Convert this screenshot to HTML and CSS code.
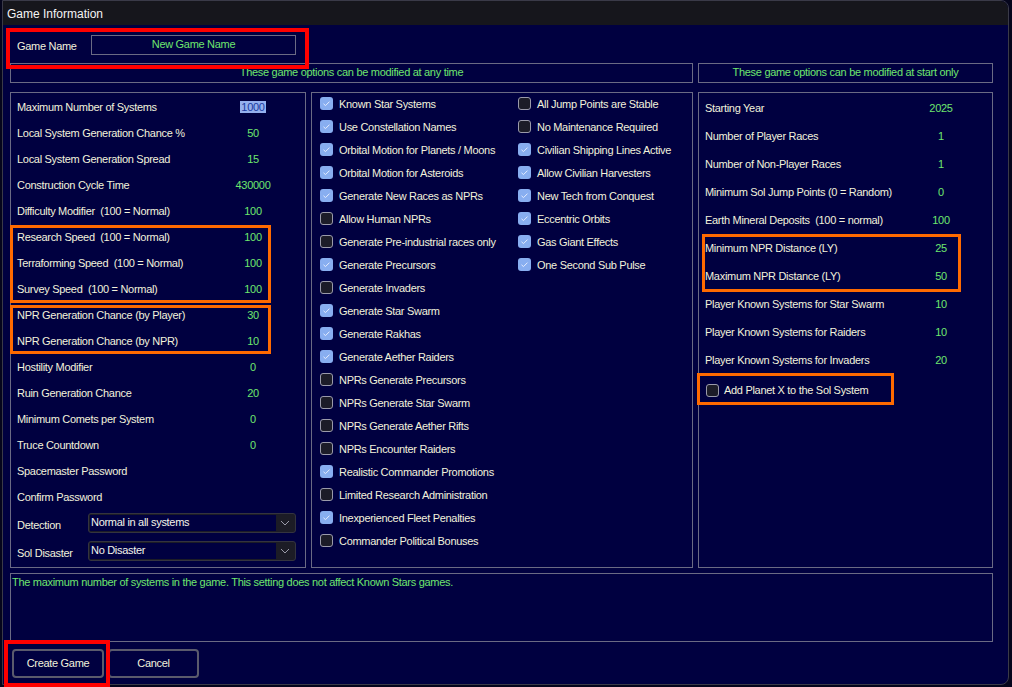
FILE: index.html
```html
<!DOCTYPE html>
<html>
<head>
<meta charset="utf-8">
<title>Game Information</title>
<link rel="stylesheet" href="styles.css">
</head>
<body>
<div class="window">
  <div class="titlebar">Game Information</div>
  <div class="content">
    <div class="name-row">
      <span class="name-label">Game Name</span>
      <div class="name-input">New Game Name</div>
    </div>
    <div class="header-row">
      <div class="hbox hbox-left">These game options can be modified at any time</div>
      <div class="hbox hbox-right">These game options can be modified at start only</div>
    </div>
    <div class="panels">
      <div class="panel panel-left">
        <div class="row"><span class="lbl">Maximum Number of Systems</span><span class="val"><span class="sel">1000</span></span></div>
        <div class="row"><span class="lbl">Local System Generation Chance %</span><span class="val">50</span></div>
        <div class="row"><span class="lbl">Local System Generation Spread</span><span class="val">15</span></div>
        <div class="row"><span class="lbl">Construction Cycle Time</span><span class="val">430000</span></div>
        <div class="row"><span class="lbl">Difficulty Modifier&nbsp; (100 = Normal)</span><span class="val">100</span></div>
        <div class="row"><span class="lbl">Research Speed&nbsp; (100 = Normal)</span><span class="val">100</span></div>
        <div class="row"><span class="lbl">Terraforming Speed&nbsp; (100 = Normal)</span><span class="val">100</span></div>
        <div class="row"><span class="lbl">Survey Speed&nbsp; (100 = Normal)</span><span class="val">100</span></div>
        <div class="row"><span class="lbl">NPR Generation Chance (by Player)</span><span class="val">30</span></div>
        <div class="row"><span class="lbl">NPR Generation Chance (by NPR)</span><span class="val">10</span></div>
        <div class="row"><span class="lbl">Hostility Modifier</span><span class="val">0</span></div>
        <div class="row"><span class="lbl">Ruin Generation Chance</span><span class="val">20</span></div>
        <div class="row"><span class="lbl">Minimum Comets per System</span><span class="val">0</span></div>
        <div class="row"><span class="lbl">Truce Countdown</span><span class="val">0</span></div>
        <div class="row"><span class="lbl">Spacemaster Password</span></div>
        <div class="row"><span class="lbl">Confirm Password</span></div>
        <div class="drow drow-first"><span class="dlbl">Detection</span>
          <div class="dropdown"><span class="dtext">Normal in all systems</span><span class="darrow"><svg width="10" height="6" viewBox="0 0 10 6"><path d="M1 1 L5 5 L9 1" fill="none" stroke="#9a9aa8" stroke-width="1"/></svg></span></div>
        </div>
        <div class="drow"><span class="dlbl">Sol Disaster</span>
          <div class="dropdown"><span class="dtext">No Disaster</span><span class="darrow"><svg width="10" height="6" viewBox="0 0 10 6"><path d="M1 1 L5 5 L9 1" fill="none" stroke="#9a9aa8" stroke-width="1"/></svg></span></div>
        </div>
      </div>
      <div class="panel panel-mid">
        <div class="ccol">
          <div class="crow"><span class="cb on"></span>Known Star Systems</div>
          <div class="crow"><span class="cb on"></span>Use Constellation Names</div>
          <div class="crow"><span class="cb on"></span>Orbital Motion for Planets / Moons</div>
          <div class="crow"><span class="cb on"></span>Orbital Motion for Asteroids</div>
          <div class="crow"><span class="cb on"></span>Generate New Races as NPRs</div>
          <div class="crow"><span class="cb"></span>Allow Human NPRs</div>
          <div class="crow"><span class="cb"></span>Generate Pre-industrial races only</div>
          <div class="crow"><span class="cb on"></span>Generate Precursors</div>
          <div class="crow"><span class="cb"></span>Generate Invaders</div>
          <div class="crow"><span class="cb on"></span>Generate Star Swarm</div>
          <div class="crow"><span class="cb on"></span>Generate Rakhas</div>
          <div class="crow"><span class="cb on"></span>Generate Aether Raiders</div>
          <div class="crow"><span class="cb"></span>NPRs Generate Precursors</div>
          <div class="crow"><span class="cb"></span>NPRs Generate Star Swarm</div>
          <div class="crow"><span class="cb"></span>NPRs Generate Aether Rifts</div>
          <div class="crow"><span class="cb"></span>NPRs Encounter Raiders</div>
          <div class="crow"><span class="cb on"></span>Realistic Commander Promotions</div>
          <div class="crow"><span class="cb"></span>Limited Research Administration</div>
          <div class="crow"><span class="cb on"></span>Inexperienced Fleet Penalties</div>
          <div class="crow"><span class="cb"></span>Commander Political Bonuses</div>
        </div>
        <div class="ccol">
          <div class="crow"><span class="cb"></span>All Jump Points are Stable</div>
          <div class="crow"><span class="cb"></span>No Maintenance Required</div>
          <div class="crow"><span class="cb on"></span>Civilian Shipping Lines Active</div>
          <div class="crow"><span class="cb on"></span>Allow Civilian Harvesters</div>
          <div class="crow"><span class="cb on"></span>New Tech from Conquest</div>
          <div class="crow"><span class="cb on"></span>Eccentric Orbits</div>
          <div class="crow"><span class="cb on"></span>Gas Giant Effects</div>
          <div class="crow"><span class="cb on"></span>One Second Sub Pulse</div>
        </div>
      </div>
      <div class="panel panel-right">
        <div class="row rrow"><span class="lbl">Starting Year</span><span class="val">2025</span></div>
        <div class="row rrow"><span class="lbl">Number of Player Races</span><span class="val">1</span></div>
        <div class="row rrow"><span class="lbl">Number of Non-Player Races</span><span class="val">1</span></div>
        <div class="row rrow"><span class="lbl">Minimum Sol Jump Points (0 = Random)</span><span class="val">0</span></div>
        <div class="row rrow"><span class="lbl">Earth Mineral Deposits&nbsp; (100 = normal)</span><span class="val">100</span></div>
        <div class="row rrow"><span class="lbl">Minimum NPR Distance (LY)</span><span class="val">25</span></div>
        <div class="row rrow"><span class="lbl">Maximum NPR Distance (LY)</span><span class="val">50</span></div>
        <div class="row rrow"><span class="lbl">Player Known Systems for Star Swarm</span><span class="val">10</span></div>
        <div class="row rrow"><span class="lbl">Player Known Systems for Raiders</span><span class="val">10</span></div>
        <div class="row rrow"><span class="lbl">Player Known Systems for Invaders</span><span class="val">20</span></div>
        <div class="crow planetx"><span class="cb"></span>Add Planet X to the Sol System</div>
      </div>
    </div>
    <div class="desc">The maximum number of systems in the game. This setting does not affect Known Stars games.</div>
    <div class="buttons">
      <button class="btn btn-create">Create Game</button>
      <button class="btn btn-cancel">Cancel</button>
    </div>
  </div>
</div>
<div class="mark mark-red mark-name"></div>
<div class="mark mark-red mark-create"></div>
<div class="mark mark-orange mark-speed"></div>
<div class="mark mark-orange mark-npr"></div>
<div class="mark mark-orange mark-dist"></div>
<div class="mark mark-orange mark-planetx"></div>
</body>
</html>
```

FILE: styles.css
```css
* { box-sizing: border-box; }
html, body { margin: 0; padding: 0; }
body {
  background: #05051c;
  width: 1012px;
  height: 687px;
  overflow: hidden;
  padding-left: 2px;
  font-family: "Liberation Sans", Arial, sans-serif;
  font-size: 11px;
  letter-spacing: -0.3px;
  color: #f2f2dc;
}
.window {
  width: 1007px;
  height: 685px;
  background: #000040;
  border: 1px solid #3a3a48;
  border-radius: 0 8px 8px 0;
  overflow: hidden;
  display: flex;
  flex-direction: column;
}
.titlebar {
  height: 24px;
  flex: none;
  background: #16161c;
  color: #f4f4f4;
  font-size: 12px;
  letter-spacing: 0;
  padding: 3px 0 0 4px;
  line-height: 20px;
}
.content {
  padding-left: 7px;
  display: flex;
  flex-direction: column;
}
.name-row {
  margin-top: 10px;
  height: 20px;
  display: flex;
  align-items: center;
}
.name-label {
  margin-left: 7px;
  width: 74px;
  padding-top: 1px;
}
.name-input {
  width: 205px;
  height: 20px;
  border: 1px solid #6a6a84;
  color: #6ee66e;
  text-align: center;
  line-height: 16px;
}
.header-row {
  margin-top: 8px;
  display: flex;
  gap: 5px;
}
.hbox {
  height: 20px;
  border: 1px solid #6a6a84;
  color: #6ee66e;
  text-align: center;
  line-height: 17px;
}
.hbox-left { width: 683px; }
.hbox-right { width: 295px; }
.panels {
  margin-top: 9px;
  display: flex;
  gap: 5px;
  height: 476px;
}
.panel {
  border: 1px solid #6a6a84;
  height: 476px;
}
.panel-left {
  width: 296px;
  padding: 1px 0 0 6px;
}
.panel-mid {
  width: 382px;
  padding-left: 8px;
  display: flex;
}
.panel-right {
  width: 295px;
  padding: 1px 0 0 6px;
}
.row {
  height: 26px;
  display: flex;
  align-items: center;
}
.rrow { height: 28px; }
.lbl {
  width: 216px;
  flex: none;
  white-space: nowrap;
}
.val {
  width: 40px;
  text-align: center;
  color: #6ee66e;
  white-space: nowrap;
}
.sel {
  background: #94b0ee;
  color: #1a3aa0;
  padding: 0 1px;
}
.drow {
  margin-top: 8px;
  height: 20px;
  display: flex;
  align-items: center;
}
.drow-first { margin-top: 3px; }
.dlbl {
  width: 71px;
  padding-top: 4px;
}
.dropdown {
  width: 208px;
  height: 20px;
  border: 1px solid #34343f;
  border-radius: 3px;
  background: #1c1c26;
  display: flex;
  padding: 1px;
}
.dtext {
  width: 186px;
  background: #000040;
  color: #f4f4ea;
  padding-left: 1px;
  line-height: 15px;
}
.darrow {
  flex: 1;
  display: flex;
  align-items: center;
  justify-content: center;
}
.ccol {
  width: 198px;
  flex: none;
  margin-top: -1px;
}
.crow {
  height: 23px;
  display: flex;
  align-items: center;
  white-space: nowrap;
}
.cb {
  width: 13px;
  height: 13px;
  flex: none;
  margin-right: 6px;
  border: 1px solid #9a9aaa;
  border-radius: 3px;
  background: #1c1c28;
}
.cb.on {
  border: none;
  background: #88aef0 url("data:image/svg+xml;utf8,<svg xmlns='http://www.w3.org/2000/svg' width='13' height='13'><path d='M3.5 6.8 L5.5 8.6 L9.5 4.6' fill='none' stroke='%23e4ecff' stroke-width='1'/></svg>") center / 13px 13px no-repeat;
}
.planetx {
  margin-top: 2px;
  height: 28px;
  padding-left: 1px;
}
.planetx .cb { margin-right: 5px; }
.desc {
  margin-top: 5px;
  width: 983px;
  height: 69px;
  border: 1px solid #6a6a84;
  color: #6ee66e;
  padding: 1px 0 0 1px;
  line-height: 14px;
}
.buttons {
  margin-top: 7px;
  margin-left: 2px;
  display: flex;
  gap: 4px;
}
.btn {
  height: 29px;
  background: #000040;
  border: 2px solid #5a5a6c;
  border-radius: 4px;
  color: #f2f2dc;
  font-family: "Liberation Sans", Arial, sans-serif;
  font-size: 11px;
  letter-spacing: -0.3px;
  padding: 0 0 2px 0;
}
.btn-create { width: 92px; }
.btn-cancel { width: 91px; }
.mark {
  position: absolute;
  pointer-events: none;
}
.mark-red { border: 4px solid #ff0000; }
.mark-orange { border: 3px solid #ff6a00; }
.mark-name { left: 6px; top: 28px; width: 303px; height: 41px; }
.mark-create { left: 4px; top: 640px; width: 106px; height: 47px; }
.mark-speed { left: 10px; top: 225px; width: 261px; height: 78px; }
.mark-npr { left: 10px; top: 305px; width: 261px; height: 49px; }
.mark-dist { left: 702px; top: 234px; width: 259px; height: 58px; }
.mark-planetx { left: 697px; top: 373px; width: 197px; height: 32px; }
```
